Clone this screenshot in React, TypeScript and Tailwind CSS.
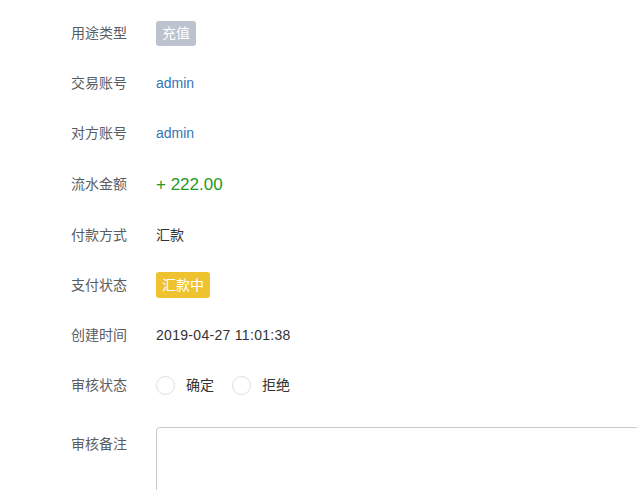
import React from "react";

const Label = ({ children }: { children: React.ReactNode }) => (
  <div className="w-[127px] shrink-0 text-right text-[14px] text-[#5a5d62]">{children}</div>
);

const Row = ({ label, children, tall }: { label: string; children: React.ReactNode; tall?: boolean }) => (
  <div className={tall ? "flex h-[52px] items-center" : "flex h-[50px] items-center"}>
    <Label>{label}</Label>
    <div className="ml-[29px] flex items-center text-[14px] text-[#333]">{children}</div>
  </div>
);

const Radio = ({ text }: { text: string }) => (
  <label className="flex items-center">
    <span className="h-[19px] w-[19px] rounded-full border border-[#dcdfe6] bg-white" />
    <span className="ml-[11px] text-[14px] text-[#333]">{text}</span>
  </label>
);

export default function App() {
  return (
    <div
      className="h-[490px] w-[637px] overflow-hidden bg-white pt-[8px]"
      style={{ fontFamily: '"Liberation Sans", "Noto Sans CJK SC", sans-serif' }}
    >
      <Row label="用途类型">
        <span className="flex h-[25px] items-center rounded-[3px] bg-[#bcc3cf] px-[6px] text-[14px] text-white">充值</span>
      </Row>
      <Row label="交易账号">
        <span className="text-[#3474b4]">admin</span>
      </Row>
      <Row label="对方账号">
        <span className="text-[#3474b4]">admin</span>
      </Row>
      <Row label="流水金额" tall>
        <span className="mt-[2px] text-[17px] text-[#1f9a1f]">+ 222.00</span>
      </Row>
      <Row label="付款方式">
        <span>汇款</span>
      </Row>
      <Row label="支付状态">
        <span className="flex h-[26px] items-center rounded-[3px] bg-[#efc22f] px-[6px] text-[14px] text-white">汇款中</span>
      </Row>
      <Row label="创建时间">
        <span className="tracking-[0.3px]">2019-04-27 11:01:38</span>
      </Row>
      <Row label="审核状态">
        <div className="flex items-center gap-[18px]">
          <Radio text="确定" />
          <Radio text="拒绝" />
        </div>
      </Row>
      <div className="mt-[17px] flex items-start">
        <div className="pt-[7px]">
          <Label>审核备注</Label>
        </div>
        <div className="ml-[29px] h-[100px] w-[520px] shrink-0 rounded-[4px] border border-[#c4c9d2] bg-white" />
      </div>
    </div>
  );
}
